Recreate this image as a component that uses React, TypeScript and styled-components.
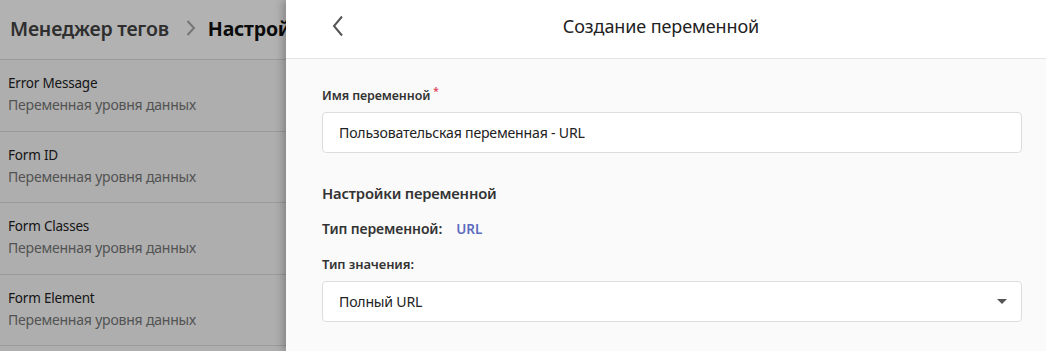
import React from "react";
import styled, { createGlobalStyle } from "styled-components";

const Global = createGlobalStyle`
  html, body { margin: 0; padding: 0; }
  body {
    font-family: "Noto Sans", "Open Sans", sans-serif;
    background: #fafafa;
    overflow: hidden;
  }
  * { box-sizing: border-box; }
`;

const Screen = styled.div`
  position: relative;
  width: 1046px;
  height: 351px;
  overflow: hidden;
  background: #fafafa;
`;

const Page = styled.div`
  display: flex;
  flex-direction: column;
  width: 100%;
`;

const PageHeader = styled.header`
  height: 60px;
  display: flex;
  align-items: center;
  padding: 0 10px 3px;
  border-bottom: 1px solid #ddd;
  background: #fff;
  font-size: 19.5px;
`;

const Crumb = styled.span<{ $current?: boolean }>`
  font-weight: ${(p) => (p.$current ? 700 : 600)};
  color: ${(p) => (p.$current ? "#111" : "#444")};
  white-space: nowrap;
  letter-spacing: -0.2px;
`;

const CrumbSep = styled.svg`
  margin: 0 12px 0 17px;
  flex-shrink: 0;
`;

const List = styled.ul`
  list-style: none;
  margin: 0;
  padding: 0;
`;

const Item = styled.li`
  height: 71.5px;
  display: flex;
  flex-direction: column;
  justify-content: center;
  gap: 3px;
  padding: 0 8px 2px;
  border-bottom: 1px solid #ddd;
`;

const ItemTitle = styled.span`
  font-size: 13.5px;
  color: #222;
  letter-spacing: -0.2px;
`;

const ItemSub = styled.span`
  font-size: 14px;
  color: #777;
  letter-spacing: -0.2px;
`;

const Overlay = styled.div`
  position: absolute;
  inset: 0;
  background: rgba(0, 0, 0, 0.3);
`;

const Drawer = styled.aside`
  position: absolute;
  top: 0;
  right: 0;
  bottom: 0;
  width: 760px;
  background: #fafafa;
  box-shadow: -3px 0 8px rgba(0, 0, 0, 0.25);
  display: flex;
  flex-direction: column;
`;

const DrawerHeader = styled.div`
  height: 59px;
  flex-shrink: 0;
  background: #fff;
  border-bottom: 1px solid #e3e3e3;
  display: grid;
  grid-template-columns: 75px 1fr 85px;
  align-items: center;
  padding-bottom: 6px;
`;

const BackButton = styled.button`
  border: 0;
  background: none;
  padding: 0;
  margin-left: 42px;
  width: 20px;
  height: 24px;
  display: flex;
  align-items: center;
  justify-content: center;
  cursor: pointer;
`;

const DrawerTitle = styled.h1`
  margin: 0;
  text-align: center;
  font-size: 18px;
  font-weight: 400;
  color: #222;
  letter-spacing: -0.1px;
`;

const Body = styled.div`
  padding: 28px 24px 0 36px;
  display: flex;
  flex-direction: column;
`;

const Label = styled.label<{ $size?: number }>`
  font-size: ${(p) => p.$size ?? 12.5}px;
  font-weight: 600;
  color: #333;
  letter-spacing: -0.1px;
  display: flex;
  align-items: flex-start;
  gap: 3px;
`;

const Required = styled.span`
  color: #e0475a;
  font-size: 10px;
  line-height: 1;
  margin-top: -1px;
`;

const Field = styled.div`
  margin-top: 8px;
  height: 41px;
  background: #fff;
  border: 1px solid #ddd;
  border-radius: 4px;
  display: flex;
  align-items: center;
  justify-content: space-between;
  padding: 0 16px 0 16px;
  font-size: 14.1px;
  color: #222;
  letter-spacing: -0.2px;
`;

const SectionTitle = styled.h2`
  margin: 30px 0 0;
  font-size: 14.8px;
  font-weight: 600;
  color: #333;
  letter-spacing: -0.2px;
`;

const TypeRow = styled.div`
  margin-top: 16px;
  display: flex;
  align-items: baseline;
  gap: 14px;
`;

const TypeValue = styled.span`
  font-size: 13.5px;
  font-weight: 600;
  color: #5c6bc0;
`;

const ValueLabel = styled(Label)`
  margin-top: 17px;
`;

const Caret = styled.span`
  width: 0;
  height: 0;
  border-left: 5px solid transparent;
  border-right: 5px solid transparent;
  border-top: 5px solid #555;
  margin-right: -2px;
`;

const items = ["Error Message", "Form ID", "Form Classes", "Form Element"];

export default function App() {
  return (
    <>
      <Global />
      <Screen>
        <Page>
          <PageHeader>
            <Crumb>Менеджер тегов</Crumb>
            <CrumbSep width="10" height="20" viewBox="0 0 10 20">
              <path d="M1.5 3 L8 10 L1.5 17" fill="none" stroke="#aaa" strokeWidth="2" />
            </CrumbSep>
            <Crumb $current>Настройки переменных</Crumb>
          </PageHeader>
          <List>
            {items.map((t) => (
              <Item key={t}>
                <ItemTitle>{t}</ItemTitle>
                <ItemSub>Переменная уровня данных</ItemSub>
              </Item>
            ))}
          </List>
        </Page>
        <Overlay />
        <Drawer>
          <DrawerHeader>
            <BackButton aria-label="Назад">
              <svg width="14" height="22" viewBox="0 0 14 22">
                <path d="M11 1.5 L3 11 L11 20.5" fill="none" stroke="#555" strokeWidth="2" />
              </svg>
            </BackButton>
            <DrawerTitle>Создание переменной</DrawerTitle>
            <span />
          </DrawerHeader>
          <Body>
            <Label>
              Имя переменной<Required>*</Required>
            </Label>
            <Field>Пользовательская переменная - URL</Field>
            <SectionTitle>Настройки переменной</SectionTitle>
            <TypeRow>
              <Label as="span" $size={14}>Тип переменной:</Label>
              <TypeValue>URL</TypeValue>
            </TypeRow>
            <ValueLabel $size={13}>Тип значения:</ValueLabel>
            <Field>
              Полный URL
              <Caret />
            </Field>
          </Body>
        </Drawer>
      </Screen>
    </>
  );
}
